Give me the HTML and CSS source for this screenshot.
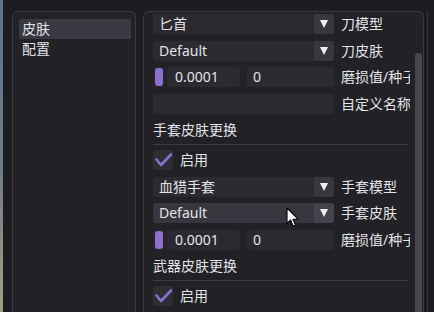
FILE: index.html
```html
<!DOCTYPE html>
<html>
<head>
<meta charset="utf-8">
<link rel="stylesheet" href="styles.css">
</head>
<body>
<div class="app">
  <div class="strip"></div>
  <div class="window">
    <div class="left">
      <div class="nav-item active">皮肤</div>
      <div class="nav-item">配置</div>
    </div>
    <div class="right">
      <div class="content">
        <div class="row">
          <div class="combo"><span class="val">匕首</span><span class="arrow"><i class="tri"></i></span></div>
          <span class="label">刀模型</span>
        </div>
        <div class="row">
          <div class="combo"><span class="val">Default</span><span class="arrow"><i class="tri"></i></span></div>
          <span class="label">刀皮肤</span>
        </div>
        <div class="row">
          <div class="grabframe"><div class="grab"></div></div>
          <div class="input in1">0.0001</div>
          <div class="input in2">0</div>
          <span class="label">磨损值/种子</span>
        </div>
        <div class="row">
          <div class="input wide"></div>
          <span class="label">自定义名称</span>
        </div>
        <div class="section">手套皮肤更换</div>
        <div class="sep"></div>
        <div class="row">
          <div class="check"><svg width="20" height="20" viewBox="0 0 20 20"><polyline points="3.5,9.5 8,15 18,4.5" fill="none" stroke="#8b6dcc" stroke-width="2.6" stroke-linecap="round" stroke-linejoin="round"/></svg></div>
          <span class="label">启用</span>
        </div>
        <div class="row">
          <div class="combo"><span class="val">血猎手套</span><span class="arrow"><i class="tri"></i></span></div>
          <span class="label">手套模型</span>
        </div>
        <div class="row">
          <div class="combo hover"><span class="val">Default</span><span class="arrow"><i class="tri"></i></span></div>
          <span class="label">手套皮肤</span>
        </div>
        <div class="row">
          <div class="grabframe"><div class="grab"></div></div>
          <div class="input in1">0.0001</div>
          <div class="input in2">0</div>
          <span class="label">磨损值/种子</span>
        </div>
        <div class="section">武器皮肤更换</div>
        <div class="sep"></div>
        <div class="row">
          <div class="check"><svg width="20" height="20" viewBox="0 0 20 20"><polyline points="3.5,9.5 8,15 18,4.5" fill="none" stroke="#8b6dcc" stroke-width="2.6" stroke-linecap="round" stroke-linejoin="round"/></svg></div>
          <span class="label">启用</span>
        </div>
        <div class="row">
          <div class="combo"><span class="val"></span><span class="arrow"><i class="tri"></i></span></div>
        </div>
      </div>
      <div class="scroll"><div class="thumb"></div></div>
    </div>
    <div class="edge"></div>
  </div>
  <svg class="cursor" width="14" height="22" viewBox="0 0 14 22"><path d="M1 1 L1 16.5 L4.6 13 L7.2 19.2 L9.6 18.2 L7 12.2 L12 12.2 Z" fill="#ffffff" stroke="#000000" stroke-width="1.1" stroke-linejoin="round"/></svg>
</div>
</body>
</html>
```

FILE: styles.css
```css
html, body {
  margin: 0;
  padding: 0;
  background: #1c1b20;
}
body {
  font-family: "Noto Sans", "Noto Sans CJK SC", sans-serif;
  font-size: 14px;
  color: #e4e4e6;
}
.app {
  position: relative;
  display: flex;
  width: 434px;
  height: 312px;
  overflow: hidden;
}
.strip {
  width: 3px;
  flex: none;
  background: linear-gradient(#5f7286, #6f7d8a 55%, #8d8f80 80%, #a29f86);
}
.window {
  flex: 1;
  display: flex;
  background: #1d1c21;
  padding: 11px 0 0 9px;
}
.left {
  width: 124px;
  box-sizing: border-box;
  border: 1px solid #3b3a42;
  border-bottom: none;
  border-radius: 6px 6px 0 0;
  background: #222126;
  padding: 7px 4px 0 6px;
  flex: none;
}
.nav-item {
  height: 20px;
  line-height: 20px;
  padding-left: 3px;
  border-radius: 2px;
}
.nav-item.active {
  background: #393943;
}
.right {
  margin-left: 7px;
  width: 281px;
  box-sizing: border-box;
  border: 1px solid #3b3a42;
  border-bottom: none;
  border-radius: 6px 6px 0 0;
  background: #222126;
  display: flex;
  padding-left: 9px;
  flex: none;
}
.content {
  width: 257px;
  padding-top: 2px;
  overflow: hidden;
}
.scroll {
  width: 7px;
  margin-left: 5px;
  margin-right: 1px;
  padding-top: 41px;
  display: flex;
  flex-direction: column;
}
.thumb {
  flex: 1;
  background: #47464e;
  border-radius: 3px 3px 0 0;
}
.edge {
  width: 1px;
  margin-left: 3px;
  background: #34333a;
  flex: none;
}
.row {
  display: flex;
  align-items: center;
  height: 20px;
  margin-bottom: 6.5px;
}
.label {
  margin-left: 7px;
  white-space: nowrap;
  line-height: 20px;
}
.combo {
  width: 181px;
  height: 20px;
  display: flex;
  background: #2b2a30;
  border-radius: 3px;
  overflow: hidden;
  flex: none;
}
.combo.hover {
  background: #38373f;
}
.val {
  flex: 1;
  padding-left: 6px;
  line-height: 20px;
  white-space: nowrap;
}
.arrow {
  width: 20px;
  background: #38373e;
  display: flex;
  align-items: center;
  justify-content: center;
}
.combo.hover .arrow {
  background: #44434b;
}
.tri {
  display: block;
  width: 0;
  height: 0;
  border-left: 4.5px solid transparent;
  border-right: 4.5px solid transparent;
  border-top: 8px solid #eeeeee;
}
.grabframe {
  width: 12px;
  height: 20px;
  box-sizing: border-box;
  padding: 1px 2px;
  background: #26252b;
  border-radius: 3px;
  flex: none;
}
.grab {
  width: 8px;
  height: 18px;
  background: #8c6fcf;
  border-radius: 3px;
}
.input {
  height: 20px;
  line-height: 20px;
  background: #2b2a30;
  border-radius: 3px;
  box-sizing: border-box;
  flex: none;
}
.in1 {
  width: 73px;
  margin-left: 2px;
  padding-left: 8px;
}
.in2 {
  width: 87px;
  margin-left: 7px;
  padding-left: 6px;
}
.wide {
  width: 181px;
}
.section {
  height: 20px;
  line-height: 20px;
  margin-bottom: 4px;
}
.sep {
  height: 1px;
  background: #3c3b43;
  margin: 0 2px 5px -5px;
}
.check {
  width: 20px;
  height: 20px;
  background: #2e2d34;
  border-radius: 3px;
  flex: none;
}
.check svg {
  display: block;
}
.cursor {
  position: absolute;
  left: 286px;
  top: 207px;
}
```
